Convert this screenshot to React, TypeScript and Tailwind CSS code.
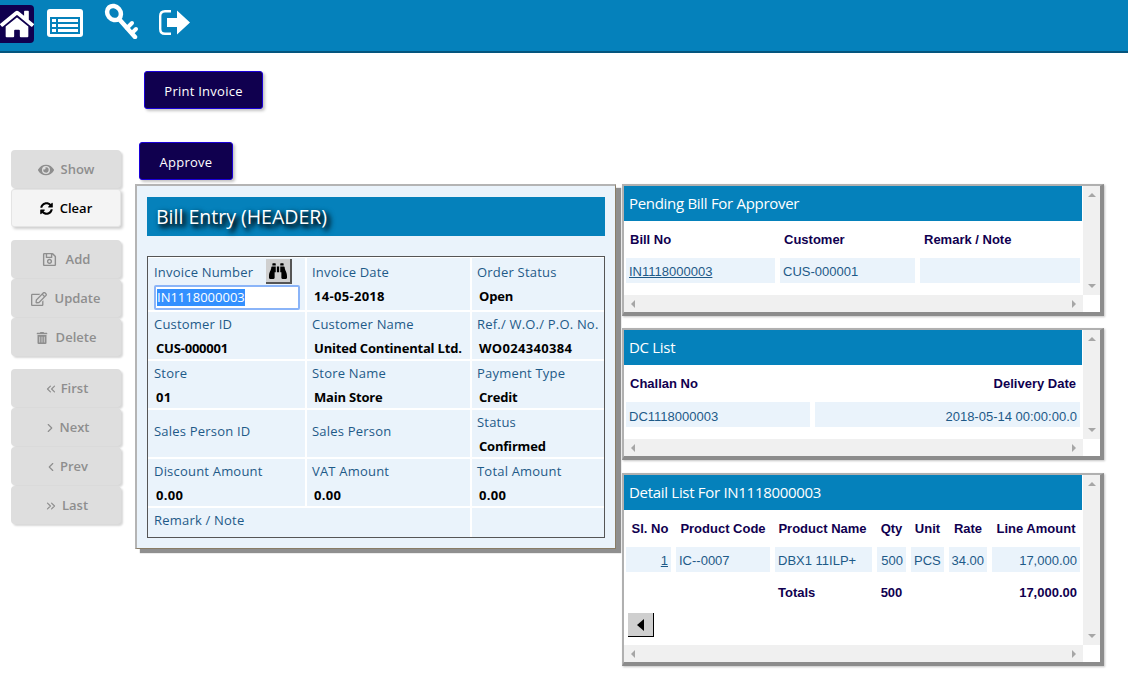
import type { ReactNode } from "react";
import { ChevronLeft, ChevronRight, ChevronsLeft, ChevronsRight } from "lucide-react";
import {
	FaBinoculars,
	FaEye,
	FaHome,
	FaRegEdit,
	FaRegSave,
	FaSyncAlt,
	FaTrashAlt,
} from "react-icons/fa";

function ListIcon() {
	return (
		<svg width="36" height="28" viewBox="0 0 36 28" className="ml-[13px] mt-[9px]">
			<rect x="0" y="0" width="36" height="28" rx="3" fill="#fff" />
			<rect x="3" y="8" width="30" height="17" fill="#0581bb" />
			<g fill="#fff">
				<rect x="5" y="10" width="4" height="3" />
				<rect x="5" y="15" width="4" height="3" />
				<rect x="5" y="20" width="4" height="3" />
				<rect x="11" y="10" width="20" height="3" />
				<rect x="11" y="15" width="20" height="3" />
				<rect x="11" y="20" width="20" height="3" />
			</g>
		</svg>
	);
}

function KeyIcon() {
	return (
		<svg width="36" height="38" viewBox="0 0 36 38" className="ml-[21px] mt-[1px]">
			<g fill="none" stroke="#fff" strokeLinecap="round">
				<ellipse cx="10" cy="12" rx="6.5" ry="7.5" strokeWidth="4.5" transform="rotate(-40 10 12)" />
				<path d="M15 18 L31 36" strokeWidth="4.5" />
				<path d="M23 27 L28 22" strokeWidth="4" />
				<path d="M28 32 L32 28" strokeWidth="4" />
			</g>
		</svg>
	);
}

function ExitIcon() {
	return (
		<svg width="32" height="26" viewBox="0 0 32 26" className="ml-[19px] mt-[10px]">
			<path
				d="M12 1.2 H6 Q1.2 1.2 1.2 6 V19 Q1.2 23.8 6 23.8 H12"
				fill="none"
				stroke="#fff"
				strokeWidth="2.4"
			/>
			<path d="M8 8 H18 V0.5 L31 12.5 L18 24.5 V17 H8 Z" fill="#fff" />
		</svg>
	);
}

function SideButton({
	icon,
	label,
	active,
	gap = "gap-[7px]",
}: {
	icon: ReactNode;
	label: string;
	active?: boolean;
	gap?: string;
}) {
	return (
		<div
			className={
				active
					? `flex h-[38px] w-[110px] items-center justify-center rounded-[3px] border border-[#e4e4e4] bg-[#f4f4f4] pt-px text-[13px] font-semibold text-black shadow-[2px_2px_3px_#cfcfcf] ${gap}`
					: `flex h-[38px] w-[110px] items-center justify-center rounded-[4px] bg-[#dedede] pt-px text-[13px] font-semibold text-[#8e8e8e] shadow-[2px_2px_2px_#d8d8d8] ${gap}`
			}
		>
			{icon}
			<span>{label}</span>
		</div>
	);
}

function DarkButton({ label, className }: { label: string; className: string }) {
	return (
		<div
			className={`flex h-[38px] items-center justify-center rounded-[3px] border border-[#1a00d8] bg-[#10004f] pt-[3px] text-[13px] font-medium tracking-[0.25px] text-white shadow-[2px_2px_3px_#c4c4c4] ${className}`}
		>
			{label}
		</div>
	);
}

const labelText = "text-[13px] leading-[18px] tracking-[0.2px] text-[#1e5a88]";

function Field({
	label,
	value,
	h,
	center,
	first,
	inset,
	tight,
}: {
	label?: string;
	value?: string;
	h: string;
	center?: boolean;
	first?: boolean;
	inset?: boolean;
	tight?: boolean;
}) {
	return (
		<div className={`bg-[#eaf3fb] ${inset ? "pl-[5px]" : "pl-[6px]"} ${h} ${center ? "flex items-center pb-[5px]" : first ? "pt-[5px]" : "pt-[3px]"}`}>
			{label && <div className={labelText}>{label}</div>}
			{value && (
				<div className={`mt-[6px] whitespace-nowrap pl-[2px] text-[13px] font-bold leading-[18px] text-black ${tight ? "tracking-[-0.2px]" : "tracking-[0.3px]"}`}>
					{value}
				</div>
			)}
		</div>
	);
}

function Scrollbars() {
	return (
		<>
			<div className="absolute right-0 top-0 bottom-[17px] flex w-[17px] flex-col items-center justify-between bg-[#f0f0f0] py-[7px]">
				<div className="h-0 w-0 border-x-[4px] border-b-[4px] border-x-transparent border-b-[#a6a6a6]" />
				<div className="h-0 w-0 border-x-[4px] border-t-[4px] border-x-transparent border-t-[#a6a6a6]" />
			</div>
			<div className="absolute left-0 right-[17px] bottom-0 flex h-[17px] items-center justify-between bg-[#f0f0f0] px-[7px]">
				<div className="h-0 w-0 border-y-[4px] border-r-[4px] border-y-transparent border-r-[#a6a6a6]" />
				<div className="h-0 w-0 border-y-[4px] border-l-[4px] border-y-transparent border-l-[#a6a6a6]" />
			</div>
		</>
	);
}

function ListPanel({
	title,
	h,
	children,
}: {
	title: string;
	h: string;
	children: ReactNode;
}) {
	return (
		<div className={`relative w-[482px] border-t-2 border-l-2 border-r-4 border-b-4 border-t-[#b0b0b0] border-l-[#b0b0b0] border-r-[#8c8c8c] border-b-[#8c8c8c] bg-white font-['Liberation_Sans',sans-serif] shadow-[1px_1px_2px_#c4c4c4] ${h}`}>
			<Scrollbars />
			<div className="flex h-[35px] w-[458px] items-center bg-[#0581bb] pb-px pl-[5px] font-['Open_Sans',sans-serif] text-[15px] tracking-[-0.3px] text-white">
				{title}
			</div>
			{children}
		</div>
	);
}

const headCell = "text-[13px] font-bold text-[#10004f] whitespace-nowrap";
const dataCell = "flex h-[25px] items-center bg-[#eaf3fb] px-[3px] pt-[2px] text-[13px] text-[#1e5a88] whitespace-nowrap";
const detailHead = `${headCell} flex h-[37px] items-center justify-center`;

export default function App() {
	return (
		<div className="h-[689px] w-[1128px] overflow-hidden bg-white font-['Open_Sans',sans-serif]">
			<div className="flex h-[53px] border-b-2 border-[#04557e] bg-[#0581bb]">
				<div className="mt-[5px] flex h-[38px] w-[34px] items-center justify-center overflow-hidden rounded-r-[4px] bg-[#10004f]">
					<FaHome className="shrink-0 text-white" size={34} />
				</div>
				<ListIcon />
				<KeyIcon />
				<ExitIcon />
			</div>

			<div className="flex">
				<div className="ml-[11px] mt-[97px] flex w-[124px] shrink-0 flex-col">
					<div className="flex flex-col gap-px">
						<SideButton icon={<FaEye size={16} />} label="Show" />
						<SideButton active icon={<FaSyncAlt size={13} />} label="Clear" />
					</div>
					<div className="mt-[13px] flex flex-col gap-px">
						<SideButton gap="gap-[9px]" icon={<FaRegSave size={15} />} label="Add" />
						<SideButton icon={<FaRegEdit size={16} />} label="Update" />
						<SideButton gap="gap-[8px]" icon={<FaTrashAlt size={12} />} label="Delete" />
					</div>
					<div className="mt-[13px] flex flex-col gap-px">
						<SideButton gap="gap-[3px]" icon={<ChevronsLeft size={14} />} label="First" />
						<SideButton gap="gap-[3px]" icon={<ChevronRight size={14} />} label="Next" />
						<SideButton gap="gap-[2px]" icon={<ChevronLeft size={14} />} label="Prev" />
						<SideButton gap="gap-[4px]" icon={<ChevronsRight size={14} />} label="Last" />
					</div>
				</div>

				<div className="w-[487px] shrink-0">
					<DarkButton label="Print Invoice" className="ml-[9px] mt-[18px] w-[119px]" />
					<DarkButton label="Approve" className="ml-[4px] mt-[33px] w-[94px]" />
					<div className="mt-[4px] h-[365px] w-[481px] border-t-2 border-l-2 border-r border-b border-t-[#b4b4b4] border-l-[#b4b4b4] border-r-[#8a7d66] border-b-[#8a7d66] bg-[#eaf3fb] pl-[10px] pt-[11px] shadow-[5px_4px_1px_#8f8f8f]">
						<div className="flex h-[39px] w-[458px] items-center bg-[#0581bb] pl-[9px] pt-px text-[19.5px] text-white [text-shadow:3px_3px_4px_#000,3px_3px_6px_#000]">
							Bill Entry (HEADER)
						</div>
						<div className="mt-[20px] grid w-[458px] grid-cols-[157px_163px_132px] gap-[2px] border border-[#555] bg-white pt-px">
							<div className="relative h-[52px] bg-[#eaf3fb] pl-[6px] pt-[5px]">
								<div className={labelText}>Invoice Number</div>
								<div className="absolute left-[118px] top-[1px] flex h-[25px] w-[26px] items-center justify-center border-r-2 border-b-2 border-[#555] bg-[#cfcfcf]">
									<FaBinoculars size={18} className="text-black" />
								</div>
								<div className="absolute left-[6px] top-[27px] flex h-[25px] w-[146px] items-center rounded-[2px] border-2 border-[#8ab4f8] bg-white pl-[1px]">
									<span className="bg-[#3390ff] text-[13px] leading-[17px] text-white">IN1118000003</span>
								</div>
							</div>
							<Field first inset h="h-[52px]" label="Invoice Date" value="14-05-2018" />
							<Field first inset tight h="h-[52px]" label="Order Status" value="Open" />
							<Field tight h="h-[47px]" label="Customer ID" value="CUS-000001" />
							<Field inset tight h="h-[47px]" label="Customer Name" value="United Continental Ltd." />
							<Field inset h="h-[47px]" label="Ref./ W.O./ P.O. No." value="WO024340384" />
							<Field h="h-[47px]" label="Store" value="01" />
							<Field inset tight h="h-[47px]" label="Store Name" value="Main Store" />
							<Field inset tight h="h-[47px]" label="Payment Type" value="Credit" />
							<Field h="h-[47px]" center label="Sales Person ID" />
							<Field inset h="h-[47px]" center label="Sales Person" />
							<Field inset tight h="h-[47px]" label="Status" value="Confirmed" />
							<Field h="h-[47px]" label="Discount Amount" value="0.00" />
							<Field inset h="h-[47px]" label="VAT Amount" value="0.00" />
							<Field inset h="h-[47px]" label="Total Amount" value="0.00" />
							<div className={`col-span-2 h-[29px] bg-[#eaf3fb] pl-[6px] pt-[3px] ${labelText}`}>
								Remark / Note
							</div>
							<div className="h-[29px] bg-[#eaf3fb]" />
						</div>
					</div>
				</div>

				<div className="mt-[131px] flex flex-col">
					<ListPanel title="Pending Bill For Approver" h="h-[132px]">
						<div className="grid h-[37px] w-[458px] grid-cols-[154px_140px_auto] items-center pl-[6px]">
							<div className={headCell}>Bill No</div>
							<div className={headCell}>Customer</div>
							<div className={headCell}>Remark / Note</div>
						</div>
						<div className="ml-[2px] grid w-[454px] grid-cols-[149px_135px_160px] gap-[5px]">
							<div className={`${dataCell} underline`}>IN1118000003</div>
							<div className={dataCell}>CUS-000001</div>
							<div className={dataCell} />
						</div>
					</ListPanel>
					<div className="mt-[12px]">
						<ListPanel title="DC List" h="h-[132px]">
							<div className="flex h-[37px] w-[456px] items-center justify-between pl-[6px] pr-[4px]">
								<div className={headCell}>Challan No</div>
								<div className={headCell}>Delivery Date</div>
							</div>
							<div className="ml-[2px] grid w-[454px] grid-cols-[184px_265px] gap-[5px]">
								<div className={`${dataCell} pt-[4px]`}>DC1118000003</div>
								<div className={`${dataCell} justify-end pt-[4px]`}>2018-05-14 00:00:00.0</div>
							</div>
						</ListPanel>
					</div>
					<div className="mt-[13px]">
						<ListPanel title="Detail List For IN1118000003" h="h-[193px]">
							<div className="ml-[2px] grid w-[454px] grid-cols-[45px_94px_97px_29px_33px_38px_88px] gap-x-[5px]">
								<div className={`${detailHead} pl-[3px]`}>Sl. No</div>
								<div className={detailHead}>Product Code</div>
								<div className={`${detailHead} pr-[2px]`}>Product Name</div>
								<div className={detailHead}>Qty</div>
								<div className={detailHead}>Unit</div>
								<div className={detailHead}>Rate</div>
								<div className={detailHead}>Line Amount</div>
								<div className={`${dataCell} justify-end`}>
									<span className="underline">1</span>
								</div>
								<div className={dataCell}>IC--0007</div>
								<div className={dataCell}>DBX1 11ILP+</div>
								<div className={`${dataCell} justify-end`}>500</div>
								<div className={dataCell}>PCS</div>
								<div className={`${dataCell} justify-end`}>34.00</div>
								<div className={`${dataCell} justify-end`}>17,000.00</div>
								<div className="col-span-2 h-[40px]" />
								<div className={`${headCell} flex items-center pl-[3px] pt-[2px]`}>Totals</div>
								<div className={`${headCell} flex items-center justify-center pt-[2px]`}>500</div>
								<div className="col-span-2" />
								<div className={`${headCell} flex items-center justify-end pr-[3px] pt-[2px]`}>17,000.00</div>
							</div>
							<div className="ml-[4px] mt-[1px] flex h-[24px] w-[26px] items-center justify-center border-r border-b border-r-black border-b-black bg-[#cfcfcf]">
								<div className="h-0 w-0 border-y-[6px] border-r-[7px] border-y-transparent border-r-black" />
							</div>
						</ListPanel>
					</div>
				</div>
			</div>
		</div>
	);
}
